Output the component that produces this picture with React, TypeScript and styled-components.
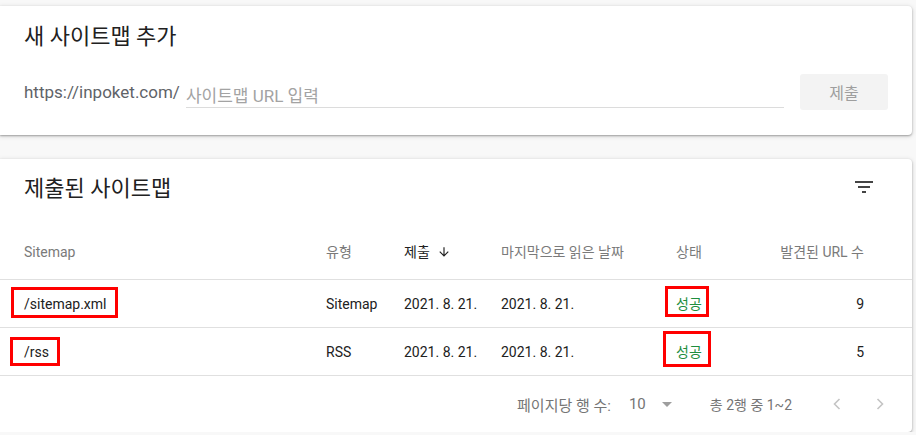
import React from "react";
import styled, { createGlobalStyle } from "styled-components";

const GlobalStyle = createGlobalStyle`
  body {
    margin: 0;
    background: #f8f8f8;
    font-family: Roboto, "Noto Sans CJK KR", sans-serif;
    color: #212121;
  }
`;

const Page = styled.div`
  display: flex;
  flex-direction: column;
  gap: 24px;
  padding: 6px 4px 0 0;
  width: 916px;
  box-sizing: border-box;
`;

const Card = styled.section`
  background: #fff;
  border-radius: 0 4px 4px 0;
  box-shadow: 0 1px 2px rgba(0, 0, 0, 0.3), 0 1px 4px 1px rgba(0, 0, 0, 0.1);
`;

const AddCard = styled(Card)`
  padding: 15px 24px 25px 24px;
  height: 129px;
  box-sizing: border-box;
`;

const Title = styled.h2`
  margin: 0;
  font-size: 22px;
  font-weight: 400;
  line-height: 32px;
  color: #212121;
`;

const FormRow = styled.div`
  display: flex;
  align-items: center;
  margin-top: 21px;
  height: 36px;
`;

const Prefix = styled.span`
  font-size: 17px;
  line-height: 20px;
  color: #5f6368;
  margin-right: 6px;
`;

const UrlInput = styled.input`
  flex: 1;
  align-self: flex-start;
  height: 34px;
  box-sizing: border-box;
  padding: 11px 0 0;
  border: none;
  border-bottom: 1px solid #dcdcdc;
  font: 17px Roboto, "Noto Sans CJK KR", sans-serif;
  color: #212121;
  outline: none;
  margin-right: 16px;

  &::placeholder {
    color: #a3a3a3;
  }
`;

const SubmitButton = styled.button`
  width: 88px;
  height: 36px;
  border: none;
  border-radius: 3px;
  background: #f3f3f3;
  color: #9e9e9e;
  font: 16px Roboto, "Noto Sans CJK KR", sans-serif;
`;

const TitleBar = styled.div`
  display: flex;
  justify-content: space-between;
  align-items: flex-start;
  height: 65px;
  box-sizing: border-box;
  padding: 14px 36px 0 24px;
`;

const IconBox = styled.span`
  display: flex;
  width: 24px;
  height: 24px;
  margin-top: 2px;
  color: #444;
`;

const Row = styled.div<{ $head?: boolean }>`
  display: grid;
  grid-template-columns: 302px 78px 97px 175px 1fr auto;
  align-items: center;
  height: ${({ $head }) => ($head ? "56px" : "48px")};
  box-sizing: border-box;
  padding: 0 48px 0 24px;
  border-bottom: 1px solid #e0e0e0;
  font-size: 14px;
  color: ${({ $head }) => ($head ? "#757575" : "#212121")};
`;

const HeadCell = styled.span<{ $active?: boolean }>`
  display: flex;
  align-items: center;
  gap: 7px;
  color: ${({ $active }) => ($active ? "#212121" : "#7a7a7a")};
  line-height: 20px;
`;

const Cell = styled.span<{ $align?: string; $status?: boolean }>`
  line-height: 20px;
  text-align: ${({ $align }) => $align || "left"};
  color: ${({ $status }) => ($status ? "#1e8e3e" : "inherit")};
`;

const Marked = styled.span<{ $t: number; $r: number; $b: number; $l: number }>`
  position: relative;
  display: inline-block;

  &::after {
    content: "";
    position: absolute;
    top: ${({ $t }) => -$t}px;
    right: ${({ $r }) => -$r}px;
    bottom: ${({ $b }) => -$b}px;
    left: ${({ $l }) => -$l}px;
    border: 3px solid #ff0000;
  }
`;

const Footer = styled.div`
  display: flex;
  justify-content: flex-end;
  align-items: center;
  height: 56px;
  padding-right: 20px;
  font-size: 14px;
  color: #757575;
`;

const PerPage = styled.div`
  display: flex;
  align-items: center;
  margin-right: 38px;
  font-size: 15px;
`;

const SelectValue = styled.span`
  display: flex;
  align-items: center;
  gap: 16px;
  margin-left: 18px;
  font-size: 15px;
  color: #757575;
`;

const Caret = styled.span`
  width: 0;
  height: 0;
  border-left: 5px solid transparent;
  border-right: 5px solid transparent;
  border-top: 5px solid #9e9e9e;
`;

const Range = styled.span`
  margin-right: 33px;
`;

const Pager = styled.div`
  display: flex;
  gap: 19px;
  color: #c4c4c4;
`;

const FilterIcon = () => (
  <svg width="24" height="24" viewBox="0 0 24 24" fill="currentColor">
    <path d="M10 18h4v-2h-4v2zM3 6v2h18V6H3zm3 7h12v-2H6v2z" />
  </svg>
);

const ArrowDown = () => (
  <svg width="14" height="14" viewBox="0 0 24 24" fill="#212121">
    <path d="M20 12l-1.41-1.41L13 16.17V4h-2v12.17l-5.58-5.59L4 12l8 8 8-8z" />
  </svg>
);

const Chevron = ({ dir }: { dir: "left" | "right" }) => (
  <svg width="24" height="24" viewBox="0 0 24 24" fill="none" stroke="currentColor" strokeWidth="1.6">
    {dir === "left" ? <polyline points="14.5,7 9.5,12 14.5,17" /> : <polyline points="9.5,7 14.5,12 9.5,17" />}
  </svg>
);

const rows = [
  { path: "/sitemap.xml", type: "Sitemap", urls: 9, mark: { t: 7, r: 12, b: 4, l: 13 }, smark: { t: 8, r: 7, b: 3, l: 11 } },
  { path: "/rss", type: "RSS", urls: 5, mark: { t: 5, r: 11, b: 4, l: 14 }, smark: { t: 11, r: 9, b: 5, l: 13 } },
];

export default function App() {
  return (
    <>
      <GlobalStyle />
      <Page>
        <AddCard>
          <Title>새 사이트맵 추가</Title>
          <FormRow>
            <Prefix>https://inpoket.com/</Prefix>
            <UrlInput placeholder="사이트맵 URL 입력" />
            <SubmitButton disabled>제출</SubmitButton>
          </FormRow>
        </AddCard>

        <Card>
          <TitleBar>
            <Title>제출된 사이트맵</Title>
            <IconBox>
              <FilterIcon />
            </IconBox>
          </TitleBar>
          <Row $head>
            <HeadCell>Sitemap</HeadCell>
            <HeadCell>유형</HeadCell>
            <HeadCell $active>
              제출 <ArrowDown />
            </HeadCell>
            <HeadCell>마지막으로 읽은 날짜</HeadCell>
            <HeadCell>상태</HeadCell>
            <HeadCell>발견된 URL 수</HeadCell>
          </Row>
          {rows.map((r) => (
            <Row key={r.path}>
              <Cell>
                <Marked $t={r.mark.t} $r={r.mark.r} $b={r.mark.b} $l={r.mark.l}>
                  {r.path}
                </Marked>
              </Cell>
              <Cell>{r.type}</Cell>
              <Cell>2021. 8. 21.</Cell>
              <Cell>2021. 8. 21.</Cell>
              <Cell $status>
                <Marked $t={r.smark.t} $r={r.smark.r} $b={r.smark.b} $l={r.smark.l}>
                  성공
                </Marked>
              </Cell>
              <Cell $align="right">{r.urls}</Cell>
            </Row>
          ))}
          <Footer>
            <PerPage>
              페이지당 행 수:
              <SelectValue>
                10 <Caret />
              </SelectValue>
            </PerPage>
            <Range>총 2행 중 1~2</Range>
            <Pager>
              <Chevron dir="left" />
              <Chevron dir="right" />
            </Pager>
          </Footer>
        </Card>
      </Page>
    </>
  );
}
